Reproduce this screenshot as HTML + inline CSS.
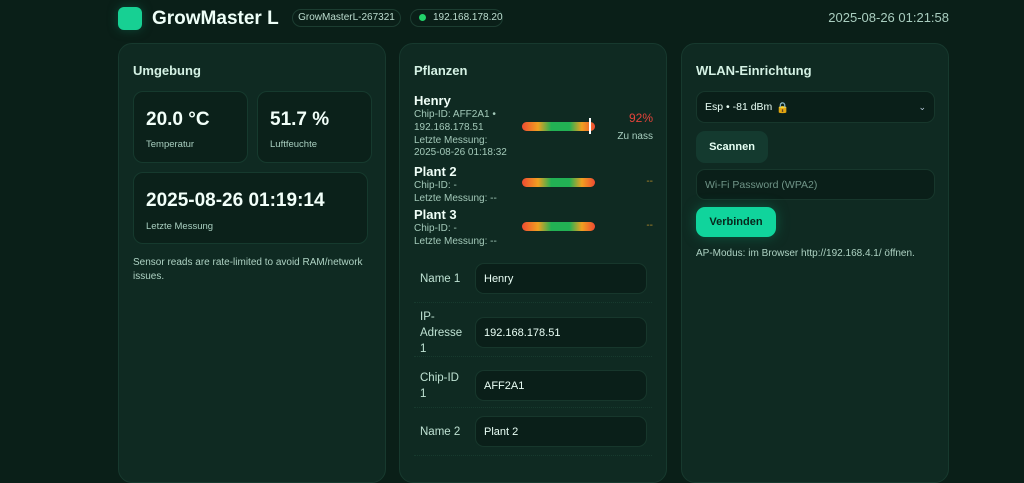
<!DOCTYPE html>
<html><head><meta charset="utf-8"><style>
*{box-sizing:border-box;margin:0;padding:0}
body{width:1024px;height:463px;overflow:hidden;background:#0a1f18;font-family:"Liberation Sans",sans-serif;color:#cfe9de;position:relative}
.abs{position:absolute}
.card{position:absolute;top:43px;width:268px;height:440px;background:#0f2a22;border:1px solid #17392e;border-radius:14px}
h2{position:absolute;font-size:13px;font-weight:bold;color:#d4f1e4;top:19px;left:14px}
.tile{position:absolute;background:#0b211a;border:1px solid #163a2e;border-radius:10px}
.val{position:absolute;left:12px;font-size:19px;font-weight:bold;color:#f2fff9}
.lbl{position:absolute;left:12px;font-size:9.5px;color:#a9cfc0}
.sm{font-size:10px;color:#a3c9b9;line-height:12.8px}
.pn{font-size:13px;font-weight:bold;color:#f0fff8;line-height:17px}
.bar{position:absolute;left:122px;width:73px;height:9px;border-radius:5px;background:linear-gradient(90deg,#ef4b32 0%,#f0a020 22%,#22b154 40%,#22b154 65%,#f0a020 82%,#ef4b32 100%)}
.inp{position:absolute;background:#0a1f19;border:1px solid #17372c;border-radius:9px;font-size:11px;color:#eafff6;padding-left:8px;display:flex;align-items:center}
.fl{position:absolute;left:20px;font-size:11.5px;color:#bfe2d3;line-height:16px}
.sep{position:absolute;left:14px;width:238px;border-top:1px dotted #173a2e}
</style></head><body>
<div class="abs" style="left:118px;top:7px;width:24px;height:23px;border-radius:6px;background:#17d093;box-shadow:0 0 10px #0e4a38"></div>
<div class="abs" style="left:152px;top:8px;font-size:19px;font-weight:bold;color:#eefff8">GrowMaster L</div>
<div class="abs" style="left:292px;top:9px;width:109px;height:18px;border:1px solid #1c3d31;border-radius:9px;font-size:10px;color:#bcdccf;text-align:center;line-height:16px">GrowMasterL-267321</div>
<div class="abs" style="left:410px;top:9px;width:93px;height:18px;border:1px solid #1c3d31;border-radius:9px;font-size:10px;color:#bcdccf;line-height:16px;padding-left:22px">192.168.178.20</div>
<div class="abs" style="left:419px;top:14px;width:7px;height:7px;border-radius:50%;background:#22d36a"></div>
<div class="abs" style="right:75px;top:10px;font-size:13px;color:#a9cdbf">2025-08-26 01:21:58</div>

<div class="card" style="left:118px">
<h2>Umgebung</h2>
<div class="tile" style="left:14px;top:47px;width:115px;height:72px"><div class="val" style="top:17px">20.0 °C</div><div class="lbl" style="top:47px">Temperatur</div></div>
<div class="tile" style="left:138px;top:47px;width:115px;height:72px"><div class="val" style="top:17px">51.7 %</div><div class="lbl" style="top:47px">Luftfeuchte</div></div>
<div class="tile" style="left:14px;top:128px;width:235px;height:72px"><div class="val" style="top:17px">2025-08-26 01:19:14</div><div class="lbl" style="top:48px">Letzte Messung</div></div>
<div class="abs sm" style="left:14px;top:212px;width:240px;line-height:14px;color:#aed2c3">Sensor reads are rate-limited to avoid RAM/network issues.</div>
</div>

<div class="card" style="left:399px">
<h2>Pflanzen</h2>
<div class="abs" style="left:14px;top:48px"><div class="pn">Henry</div><div class="sm">Chip-ID: AFF2A1 •<br>192.168.178.51<br>Letzte Messung:<br>2025-08-26 01:18:32</div></div>
<div class="bar" style="top:78px"></div><div class="abs" style="left:189px;top:74px;width:2px;height:16px;background:#fff"></div>
<div class="abs" style="right:13px;top:67px;font-size:12px;color:#e5433a">92%</div>
<div class="abs" style="right:13px;top:87px;font-size:10px;color:#a9cfc0">Zu nass</div>
<div class="abs" style="left:14px;top:119px"><div class="pn">Plant 2</div><div class="sm">Chip-ID: -<br>Letzte Messung: --</div></div>
<div class="bar" style="top:134px"></div><div class="abs" style="right:13px;top:132px;font-size:10px;color:#b38a2a">--</div>
<div class="abs" style="left:14px;top:162px"><div class="pn">Plant 3</div><div class="sm">Chip-ID: -<br>Letzte Messung: --</div></div>
<div class="bar" style="top:178px"></div><div class="abs" style="right:13px;top:176px;font-size:10px;color:#b38a2a">--</div>
<div class="fl" style="top:227px">Name 1</div><div class="inp" style="left:75px;top:219px;width:172px;height:31px">Henry</div>
<div class="sep" style="top:258px"></div>
<div class="fl" style="top:265px">IP-<br>Adresse<br>1</div><div class="inp" style="left:75px;top:273px;width:172px;height:31px">192.168.178.51</div>
<div class="sep" style="top:312px"></div>
<div class="fl" style="top:326px">Chip-ID<br>1</div><div class="inp" style="left:75px;top:326px;width:172px;height:31px">AFF2A1</div>
<div class="sep" style="top:363px"></div>
<div class="fl" style="top:380px">Name 2</div><div class="inp" style="left:75px;top:372px;width:172px;height:31px">Plant 2</div>
<div class="sep" style="top:411px"></div>
</div>

<div class="card" style="left:681px">
<h2>WLAN-Einrichtung</h2>
<div class="inp" style="left:14px;top:47px;width:239px;height:32px;font-size:10.5px">Esp • -81 dBm <span style="color:#e0a040;margin-left:4px">🔒</span><span style="position:absolute;right:8px;font-size:9px;color:#bcd">⌄</span></div>
<div class="abs" style="left:14px;top:87px;width:72px;height:32px;background:#143a2f;border-radius:9px;font-size:11px;font-weight:bold;color:#e6fff4;text-align:center;line-height:32px">Scannen</div>
<div class="inp" style="left:14px;top:125px;width:239px;height:31px;font-size:10.5px;color:#6f9487">Wi-Fi Password (WPA2)</div>
<div class="abs" style="left:14px;top:163px;width:80px;height:30px;background:#10d49c;border-radius:9px;font-size:11px;font-weight:bold;color:#06261b;text-align:center;line-height:30px;box-shadow:0 0 12px #0c5a42">Verbinden</div>
<div class="abs sm" style="left:14px;top:204px;color:#aed2c3">AP-Modus: im Browser http://192.168.4.1/ öffnen.</div>
</div>
</body></html>
